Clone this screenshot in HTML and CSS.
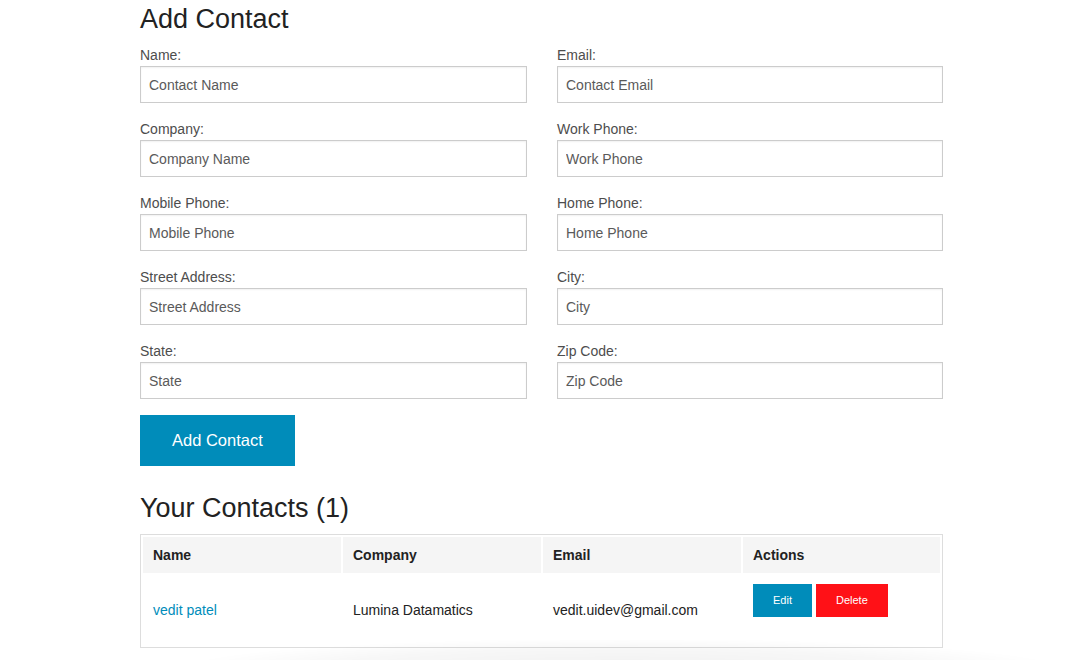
FILE: index.html
```html
<!DOCTYPE html>
<html>
<head>
<meta charset="utf-8">
<link rel="stylesheet" href="styles.css">
</head>
<body>
<div class="page">
  <h3 class="title">Add Contact</h3>
  <form class="form">
    <div class="grid">
      <div class="field"><label>Name:</label><input type="text" placeholder="Contact Name"></div>
      <div class="field"><label>Email:</label><input type="text" placeholder="Contact Email"></div>
      <div class="field"><label>Company:</label><input type="text" placeholder="Company Name"></div>
      <div class="field"><label>Work Phone:</label><input type="text" placeholder="Work Phone"></div>
      <div class="field"><label>Mobile Phone:</label><input type="text" placeholder="Mobile Phone"></div>
      <div class="field"><label>Home Phone:</label><input type="text" placeholder="Home Phone"></div>
      <div class="field"><label>Street Address:</label><input type="text" placeholder="Street Address"></div>
      <div class="field"><label>City:</label><input type="text" placeholder="City"></div>
      <div class="field"><label>State:</label><input type="text" placeholder="State"></div>
      <div class="field"><label>Zip Code:</label><input type="text" placeholder="Zip Code"></div>
    </div>
    <button type="button" class="btn-main">Add Contact</button>
  </form>
  <h3 class="title title-contacts">Your Contacts (1)</h3>
  <table class="contacts">
    <colgroup><col class="c1"><col class="c1"><col class="c1"><col class="c4"></colgroup>
    <thead>
      <tr><th>Name</th><th>Company</th><th>Email</th><th>Actions</th></tr>
    </thead>
    <tbody>
      <tr>
        <td><a href="#" class="link">vedit patel</a></td>
        <td>Lumina Datamatics</td>
        <td>vedit.uidev@gmail.com</td>
        <td class="actions"><span class="btn-sm btn-edit">Edit</span><span class="btn-sm btn-delete">Delete</span></td>
      </tr>
    </tbody>
  </table>
</div>
<div class="shade"></div>
</body>
</html>
```

FILE: styles.css
```css
html, body {
  margin: 0;
  padding: 0;
  background: #fff;
}
body {
  font-family: "Liberation Sans", Arial, sans-serif;
  color: #222;
  height: 660px;
  overflow: hidden;
}
.page {
  width: 803px;
  margin-left: 140px;
}
.title {
  margin: 0;
  font-size: 27px;
  font-weight: normal;
  line-height: 38px;
  color: #222;
}
.form {
  margin-top: 5px;
}
.grid {
  display: grid;
  grid-template-columns: 387px 386px;
  column-gap: 30px;
}
.field label {
  display: block;
  font-size: 14px;
  line-height: 21px;
  color: #4d4d4d;
  padding-top: 2px;
}
.field input {
  display: block;
  box-sizing: border-box;
  width: 100%;
  height: 37px;
  margin: 0 0 14px 0;
  padding: 0 8px;
  border: 1px solid #ccc;
  border-radius: 0;
  font-family: "Liberation Sans", Arial, sans-serif;
  font-size: 14px;
  color: #333;
  box-shadow: inset 0 1px 2px rgba(0,0,0,0.06);
  outline: none;
}
.field input::placeholder {
  color: #5a5a5a;
}
.btn-main {
  display: block;
  margin-top: 2px;
  border: 0;
  background: #008cba;
  color: #fff;
  font-family: "Liberation Sans", Arial, sans-serif;
  font-size: 16.5px;
  line-height: 19px;
  padding: 16px 32px;
  cursor: pointer;
}
.title-contacts {
  margin-top: 23px;
  font-size: 27px;
}
.contacts {
  margin-top: 7px;
  width: 803px;
  table-layout: fixed;
  border-collapse: separate;
  border-spacing: 2px;
  border: 1px solid #ddd;
}
.c1 { width: 198px; }
.c4 { width: 197px; }
.contacts th {
  background: #f5f5f5;
  height: 36px;
  padding: 0 10px;
  text-align: left;
  font-size: 14px;
  font-weight: bold;
  color: #222;
  vertical-align: middle;
}
.contacts td {
  height: 70px;
  padding: 0 10px;
  font-size: 14px;
  color: #222;
  vertical-align: middle;
}
.contacts td.actions {
  vertical-align: top;
  padding-top: 9px;
  box-sizing: border-box;
}
.link {
  color: #008cba;
  text-decoration: none;
}
.btn-sm {
  display: inline-block;
  font-size: 11px;
  line-height: 13px;
  padding: 10px 20px;
  color: #fff;
  margin-right: 4px;
}
.btn-edit {
  background: #008cba;
}
.btn-delete {
  background: #ff1117;
}
.shade {
  position: fixed;
  left: 200px;
  right: 40px;
  bottom: -40px;
  height: 60px;
  background: radial-gradient(ellipse at center, rgba(0,0,0,0.06) 0%, rgba(0,0,0,0.03) 50%, rgba(0,0,0,0) 75%);
  pointer-events: none;
}
```
